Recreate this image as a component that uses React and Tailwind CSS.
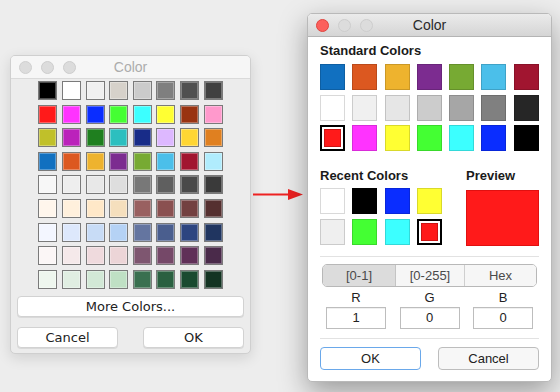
import React from 'react';

const paletteRows = [
  ['#000000', '#ffffff', '#f0f0f0', '#d6d1ca', '#cbcbcb', '#7f7f7f', '#505050', '#404040'],
  ['#ff1a1a', '#ff33ff', '#0a2dff', '#45ff33', '#3cffff', '#ffff33', '#993311', '#ff99cc'],
  ['#c0c02a', '#bb22bb', '#1f7f1f', '#2cbfbf', '#182c88', '#ddb8ff', '#ffd633', '#e08020'],
  ['#1170c0', '#dc5820', '#eeb32e', '#7c2c90', '#77aa33', '#4bbfea', '#a11530', '#b0ecfd'],
  ['#f7f7f7', '#eeeeee', '#e8e8e8', '#dedede', '#787878', '#5f5f5f', '#4a4a4a', '#3a3a3a'],
  ['#fff6ec', '#fff0dc', '#ffe8c8', '#f5dfbd', '#996060', '#8a5050', '#734040', '#553030'],
  ['#f3f6ff', '#dde8fc', '#c8dcf6', '#b5d2f5', '#6475a0', '#4a5e8e', '#2d4580', '#203560'],
  ['#fbf6f6', '#f5e9ea', '#efdadd', '#ecd5d7', '#7e5670', '#754868', '#603058', '#4a2a4a'],
  ['#eef6ee', '#e0eee2', '#d2e8d6', '#bfe0c4', '#3a7050', '#2a6040', '#1a4a30', '#133322'],
];

const standardColors = [
  '#1170c0', '#dc5820', '#eeb32e', '#7c2c90', '#77aa33', '#4bbfea', '#a11530',
  '#ffffff', '#f0f0f0', '#e6e6e6', '#cccccc', '#a6a6a6', '#808080', '#262626',
  '#ff1a1a', '#ff33ff', '#ffff33', '#44ff33', '#3cffff', '#0a2dff', '#000000',
];

const recentColors = ['#ffffff', '#000000', '#0a2dff', '#ffff33', '#efefef', '#44ff33', '#3cffff', '#ff1a1a'];

const Lights = ({ active }) => (
  <div className="absolute left-[8px] top-[5px] flex gap-[9px]">
    <span
      className={
        active
          ? 'w-[13px] h-[13px] rounded-full bg-[#fc605c] border border-[#e0443e]'
          : 'w-[13px] h-[13px] rounded-full bg-[#dcdcdc] border border-[#d0d0d0]'
      }
    />
    <span className="w-[13px] h-[13px] rounded-full bg-[#dcdcdc] border border-[#cdcdcd]" />
    <span className="w-[13px] h-[13px] rounded-full bg-[#dcdcdc] border border-[#cdcdcd]" />
  </div>
);

// swatch used in the right dialog
const Swatch = ({ color, selected }) => {
  if (selected) {
    return (
      <div className="w-[25px] h-[26px] border-2 border-black bg-white p-[2px]">
        <div className="w-full h-full border border-black/20" style={{ backgroundColor: color }} />
      </div>
    );
  }
  return <div className="w-[25px] h-[26px] border border-black/15" style={{ backgroundColor: color }} />;
};

const OldDialog = () => (
  <div className="ml-[10px] mt-[55px] w-[241px] h-[299px] flex flex-col bg-[#ececec] border border-[#cfcfcf] rounded-[5px] shadow-[0_4px_14px_rgba(0,0,0,0.12)] overflow-hidden">
    <div className="relative h-[23px] shrink-0 bg-[#f6f6f6] border-b border-[#dadada] flex items-center justify-center">
      <Lights />
      <span className="text-[14px] text-[#acacac] font-['Liberation_Sans',sans-serif]">Color</span>
    </div>

    <div className="mt-[2px] mx-auto grid grid-cols-[repeat(8,19px)] gap-[4.6px]">
      {paletteRows.flat().map((c, i) => (
        <div
          key={i}
          className="w-[19px] h-[19px] border border-[#7a7a7a] shadow-[inset_0_0_0_1px_rgba(255,255,255,0.3)]"
          style={{ backgroundColor: c }}
        />
      ))}
    </div>

    <div className="px-[6px] font-['DejaVu_Sans',sans-serif] text-[13px] text-[#222]">
      <button className="mt-[7px] w-full h-[21px] bg-white border border-[#d2d2d2] rounded-[4px] shadow-[0_1px_0_rgba(0,0,0,0.08)] leading-none">
        More Colors...
      </button>
      <div className="mt-[10px] flex justify-between">
        <button className="w-[101px] h-[21px] bg-white border border-[#d2d2d2] rounded-[4px] shadow-[0_1px_0_rgba(0,0,0,0.08)] leading-none">
          Cancel
        </button>
        <button className="w-[101px] h-[21px] bg-white border border-[#d2d2d2] rounded-[4px] shadow-[0_1px_0_rgba(0,0,0,0.08)] leading-none">
          OK
        </button>
      </div>
    </div>
  </div>
);

const NewDialog = () => (
  <div className="ml-[4px] mt-[13px] w-[245px] h-[369px] flex flex-col bg-white border border-[#b9b9b9] rounded-[5px] shadow-[0_10px_28px_rgba(0,0,0,0.35)] overflow-hidden font-['Liberation_Sans',sans-serif] text-[#1a1a1a]">
    <div className="relative h-[23px] shrink-0 bg-gradient-to-b from-[#ebebeb] to-[#d5d5d5] border-b border-[#b4b4b4] flex items-center justify-center">
      <Lights active />
      <span className="text-[14px] text-[#2a2a2a]">Color</span>
    </div>

    <div className="px-[12px] flex flex-col">
      <div className="mt-[6px] text-[13px] font-bold leading-[16px]">Standard Colors</div>
      <div className="mt-[5px] grid grid-cols-[repeat(7,25px)] gap-x-[7.3px] gap-y-[4.5px]">
        {standardColors.map((c, i) => (
          <Swatch key={i} color={c} selected={i === 14} />
        ))}
      </div>

      <div className="mt-[17px] flex justify-between">
        <div>
          <div className="text-[13px] font-bold leading-[16px]">Recent Colors</div>
          <div className="mt-[4px] grid grid-cols-[repeat(4,25px)] gap-x-[7.3px] gap-y-[5px]">
            {recentColors.map((c, i) => (
              <Swatch key={i} color={c} selected={i === 7} />
            ))}
          </div>
        </div>
        <div className="w-[73px]">
          <div className="text-[13px] font-bold leading-[16px]">Preview</div>
          <div className="mt-[6px] w-[73px] h-[56px] bg-[#ff1a1a] border border-[#e01010]" />
        </div>
      </div>

      <div className="mt-[10px] h-px bg-[#e2e2e2]" />

      <div className="mt-[7px] mx-[2px] h-[23px] flex border border-[#b8b8b8] rounded-[5px] overflow-hidden text-[13px] text-[#4a4a4a]">
        <div className="w-[73px] flex items-center justify-center bg-[#dcdcdc] border-r border-[#c4c4c4]">[0-1]</div>
        <div className="w-[69px] flex items-center justify-center bg-[#f6f6f6] border-r border-[#cfcfcf]">[0-255]</div>
        <div className="flex-1 flex items-center justify-center bg-[#f6f6f6]">Hex</div>
      </div>

      <div className="mt-[4px] px-[6px] grid grid-cols-3 gap-x-[13.5px] text-[13px]">
        {[
          ['R', '1'],
          ['G', '0'],
          ['B', '0'],
        ].map(([l, v]) => (
          <div key={l} className="flex flex-col items-center">
            <div className="leading-[14px] text-[#222]">{l}</div>
            <div className="mt-[2px] w-full h-[22px] flex items-center justify-center border border-[#bdbdbd] shadow-[inset_0_1px_0_rgba(0,0,0,0.06)] text-[#222]">
              {v}
            </div>
          </div>
        ))}
      </div>

      <div className="mt-[9px] h-px bg-[#e2e2e2]" />

      <div className="mt-[8px] flex justify-between text-[13px]">
        <button className="w-[101px] h-[23px] bg-white border border-[#6aa8ea] rounded-[4px] text-[#222] leading-none">
          OK
        </button>
        <button className="w-[101px] h-[23px] bg-[#f7f7f7] border border-[#bdbdbd] rounded-[4px] text-[#222] leading-none">
          Cancel
        </button>
      </div>
    </div>
  </div>
);

export default function App() {
  return (
    <div className="w-[560px] h-[392px] overflow-hidden bg-[#ededed] flex items-start">
      <OldDialog />
      <svg className="ml-[2px] mt-[189px] shrink-0" width="50" height="11" viewBox="0 0 50 11">
        <line x1="0" y1="5.5" x2="38" y2="5.5" stroke="#ee2222" strokeWidth="2" />
        <polygon points="35,0 50,5.5 35,11" fill="#ee2222" />
      </svg>
      <NewDialog />
    </div>
  );
}
